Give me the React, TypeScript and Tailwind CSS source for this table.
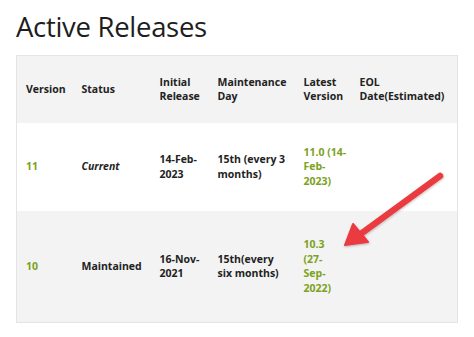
import React from "react";

const green = "text-[#7ba21c]";

export default function App() {
  return (
    <div className="relative w-[474px] h-[337px] bg-white overflow-hidden font-['Open_Sans',sans-serif] text-[#222]">
      <h1 className="pl-[16px] pt-[9px] text-[27.5px] leading-[36px] font-normal tracking-[-0.3px] text-[#1e1e1e]">
        Active Releases
      </h1>
      <table className="mt-[10px] ml-[16px] w-[442px] table-fixed border-collapse text-[10.5px] leading-[14.5px] font-bold border border-[#e4e4e4]">
        <colgroup>
          <col className="w-[56px]" />
          <col className="w-[78px]" />
          <col className="w-[58px]" />
          <col className="w-[86px]" />
          <col className="w-[56px]" />
          <col />
        </colgroup>
        <thead>
          <tr className="bg-[#f3f3f3] h-[67px]">
            <th className="pl-[9px] text-left font-bold align-middle">Version</th>
            <th className="pl-[9px] text-left font-bold align-middle">Status</th>
            <th className="pl-[9px] text-left font-bold align-middle">Initial<br />Release</th>
            <th className="pl-[9px] text-left font-bold align-middle">Maintenance<br />Day</th>
            <th className="pl-[9px] text-left font-bold align-middle">Latest<br />Version</th>
            <th className="pl-[9px] text-left font-bold align-middle">EOL<br />Date(Estimated)</th>
          </tr>
        </thead>
        <tbody>
          <tr className="bg-white h-[88px]">
            <td className={`pl-[9px] ${green}`}>11</td>
            <td className="pl-[9px] italic">Current</td>
            <td className="pl-[9px]">14-Feb-<br />2023</td>
            <td className="pl-[9px]">15th (every 3<br />months)</td>
            <td className={`pl-[9px] ${green}`}>11.0 (14-<br />Feb-<br />2023)</td>
            <td className="pl-[9px]"></td>
          </tr>
          <tr className="bg-[#f3f3f3] h-[112px]">
            <td className={`pl-[9px] ${green}`}>10</td>
            <td className="pl-[9px]">Maintained</td>
            <td className="pl-[9px]">16-Nov-<br />2021</td>
            <td className="pl-[9px]">15th(every<br />six months)</td>
            <td className={`pl-[9px] ${green}`}>10.3<br />(27-<br />Sep-<br />2022)</td>
            <td className="pl-[9px]"></td>
          </tr>
        </tbody>
      </table>
      <svg className="absolute left-0 top-0 pointer-events-none" width="474" height="337" viewBox="0 0 474 337">
        <defs>
          <filter id="sh" x="-20%" y="-20%" width="140%" height="140%">
            <feDropShadow dx="0.5" dy="1" stdDeviation="1" floodColor="#000" floodOpacity="0.25" />
          </filter>
        </defs>
        <g filter="url(#sh)" fill="#ea3a40" stroke="#ea3a40">
          <line x1="440" y1="176" x2="362" y2="233" strokeWidth="6.5" strokeLinecap="round" />
          <polygon points="345,245 353,224 368,242" strokeWidth="2" strokeLinejoin="round" />
        </g>
      </svg>
    </div>
  );
}
